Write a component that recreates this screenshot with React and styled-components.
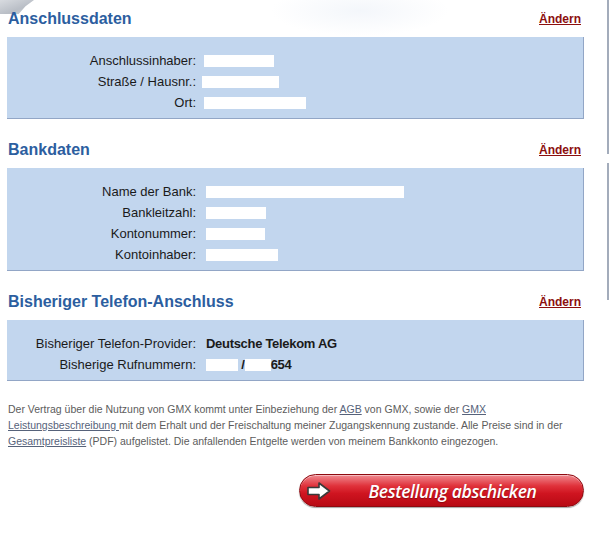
import React from "react";
import styled, { createGlobalStyle } from "styled-components";

const GlobalStyle = createGlobalStyle`
  html, body {
    margin: 0;
    padding: 0;
    background: #ffffff;
    font-family: "Liberation Sans", Arial, sans-serif;
  }
`;

const Page = styled("div")`
  position: relative;
  width: 609px;
  height: 536px;
  box-sizing: border-box;
  padding: 0 25px 0 7px;
  background:
    radial-gradient(ellipse at 50% 30%, rgba(236, 241, 248, 0.6), rgba(255, 255, 255, 0) 70%) 270px 0 / 180px 36px no-repeat;

  &::before {
    content: "";
    position: absolute;
    left: 0;
    top: 0;
    width: 34px;
    height: 14px;
    background: linear-gradient(160deg, #d8dbe0 0%, #b9bec6 60%, #c9cdd3 100%);
    clip-path: polygon(0 0, 100% 0, 75% 45%, 55% 100%, 0 100%);
  }

  &::after {
    content: "";
    position: absolute;
    right: 0;
    top: 0;
    width: 2px;
    height: 300px;
    background: linear-gradient(
      180deg,
      #a3acbb 0,
      #a3acbb 154px,
      transparent 154px,
      transparent 163px,
      #a3acbb 163px,
      #a3acbb 300px
    );
  }
`;

const Section = styled("section")`
  position: relative;
  z-index: 1;
  margin-top: ${(props) => (props.$first ? "0" : "12px")};
`;

const Header = styled("div")`
  height: 37px;
  display: flex;
  align-items: center;
  justify-content: space-between;
  padding: 0 3px 0 1px;
`;

const Title = styled("h2")`
  margin: 0;
  font-size: 16px;
  font-weight: bold;
  color: #2c5e9f;
`;

const EditLink = styled("a")`
  font-size: 12px;
  font-weight: bold;
  color: #8c0f0f;
  text-decoration: underline;
  margin-top: 1px;
`;

const Panel = styled("div")`
  background: #c2d6ee;
  border-right: 1px solid #92a6c6;
  border-bottom: 1px solid #92a6c6;
  padding: 13px 0 5px;
`;

const Row = styled("div")`
  display: grid;
  grid-template-columns: 189px 1fr;
  column-gap: 10px;
  align-items: center;
  height: 21px;
  font-size: 13px;
  color: #1a1a1a;
`;

const Label = styled("span")`
  text-align: right;
`;

const Value = styled("span")`
  display: flex;
  align-items: center;
  font-weight: ${(props) => (props.$bold ? "bold" : "normal")};
  letter-spacing: ${(props) => (props.$bold ? "-0.3px" : "0")};
`;

const Blank = styled("span")`
  display: inline-block;
  width: ${(props) => props.$w}px;
  height: 12px;
  margin-left: ${(props) => props.$shift || 0}px;
  background: #ffffff;
`;

const Notes = styled("p")`
  position: relative;
  z-index: 1;
  margin: 20px 0 0 1px;
  font-size: 10.5px;
  line-height: 16px;
  color: #5c5c5c;
  white-space: nowrap;
`;

const NoteLink = styled("a")`
  color: #56627a;
  text-decoration: underline;
`;

const Actions = styled("div")`
  display: flex;
  justify-content: flex-end;
  margin-top: 25px;
`;

const SubmitButton = styled("button")`
  width: 285px;
  height: 33px;
  display: flex;
  align-items: center;
  padding: 0 0 0 6px;
  border: 1px solid #8e0a10;
  border-radius: 17px;
  background: linear-gradient(
    180deg,
    #f08a90 0%,
    #e0323b 35%,
    #cf1420 60%,
    #b80a14 100%
  );
  box-shadow: inset 0 1px 0 rgba(255, 255, 255, 0.45), 0 1px 1px rgba(0, 0, 0, 0.35);
  cursor: pointer;
`;

const ButtonText = styled("span")`
  flex: 1;
  text-align: center;
  padding-right: 10px;
  font-family: "Open Sans", "Liberation Sans", sans-serif;
  font-style: italic;
  font-weight: 600;
  font-size: 17.5px;
  letter-spacing: -0.4px;
  color: #ffffff;
  text-shadow: 0 1px 1px rgba(90, 0, 0, 0.5);
`;

const ArrowIcon = () => (
  <svg width="26" height="20" viewBox="0 0 26 20">
    <path
      d="M2 6.5 H13 V2 L23.5 10 L13 18 V13.5 H2 Z"
      fill="#ffffff"
      stroke="#3a3a3a"
      strokeWidth="1.6"
      strokeLinejoin="round"
    />
  </svg>
);

const App = () => {
  return (
    <>
      <GlobalStyle />
      <Page>
        <Section $first>
          <Header>
            <Title>Anschlussdaten</Title>
            <EditLink href="#">Ändern</EditLink>
          </Header>
          <Panel>
            <Row>
              <Label>Anschlussinhaber:</Label>
              <Value>
                <Blank $w={70} $shift={-2} />
              </Value>
            </Row>
            <Row>
              <Label>Straße / Hausnr.:</Label>
              <Value>
                <Blank $w={77} $shift={-4} />
              </Value>
            </Row>
            <Row>
              <Label>Ort:</Label>
              <Value>
                <Blank $w={102} $shift={-2} />
              </Value>
            </Row>
          </Panel>
        </Section>

        <Section>
          <Header>
            <Title>Bankdaten</Title>
            <EditLink href="#">Ändern</EditLink>
          </Header>
          <Panel>
            <Row>
              <Label>Name der Bank:</Label>
              <Value>
                <Blank $w={198} />
              </Value>
            </Row>
            <Row>
              <Label>Bankleitzahl:</Label>
              <Value>
                <Blank $w={60} />
              </Value>
            </Row>
            <Row>
              <Label>Kontonummer:</Label>
              <Value>
                <Blank $w={59} />
              </Value>
            </Row>
            <Row>
              <Label>Kontoinhaber:</Label>
              <Value>
                <Blank $w={72} />
              </Value>
            </Row>
          </Panel>
        </Section>

        <Section>
          <Header>
            <Title>Bisheriger Telefon-Anschluss</Title>
            <EditLink href="#">Ändern</EditLink>
          </Header>
          <Panel>
            <Row>
              <Label>Bisheriger Telefon-Provider:</Label>
              <Value $bold>Deutsche Telekom AG</Value>
            </Row>
            <Row>
              <Label>Bisherige Rufnummern:</Label>
              <Value $bold>
                <Blank $w={32} />
                &nbsp;/
                <Blank $w={26} />
                654
              </Value>
            </Row>
          </Panel>
        </Section>

        <Notes>
          Der Vertrag über die Nutzung von GMX kommt unter Einbeziehung der{" "}
          <NoteLink href="#">AGB</NoteLink> von GMX, sowie der{" "}
          <NoteLink href="#">
            GMX
            <br />
            Leistungsbeschreibung{" "}
          </NoteLink>
          mit dem Erhalt und der Freischaltung meiner Zugangskennung zustande.
          Alle Preise sind in der
          <br />
          <NoteLink href="#">Gesamtpreisliste</NoteLink> (PDF) aufgelistet. Die
          anfallenden Entgelte werden von meinem Bankkonto eingezogen.
        </Notes>

        <Actions>
          <SubmitButton type="button">
            <ArrowIcon />
            <ButtonText>Bestellung abschicken</ButtonText>
          </SubmitButton>
        </Actions>
      </Page>
    </>
  );
};

export default App;
